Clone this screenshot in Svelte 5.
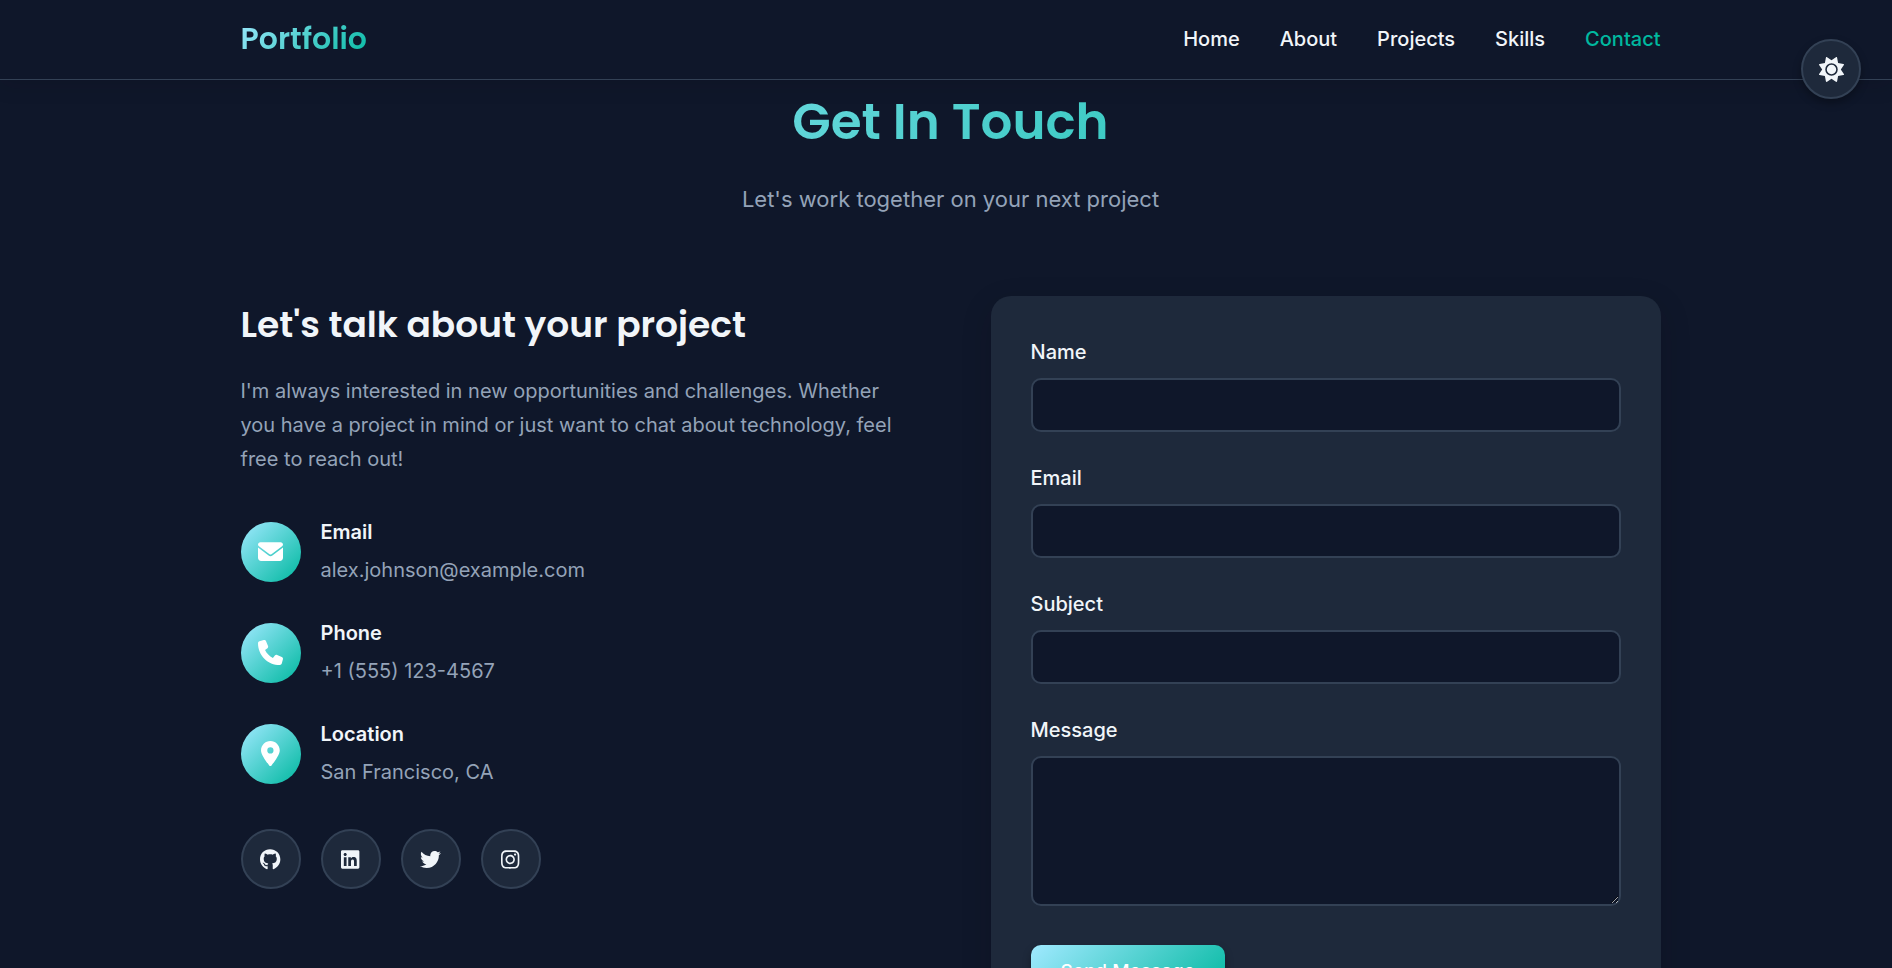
<script>
  const links = ['Home', 'About', 'Projects', 'Skills', 'Contact'];

  const contacts = [
    {
      title: 'Email',
      value: 'alex.johnson@example.com',
      box: '0 0 512 512',
      path: 'M48 64C21.5 64 0 85.5 0 112c0 15.1 7.1 29.3 19.2 38.4L236.8 313.6c11.4 8.5 27 8.5 38.4 0L492.8 150.4c12.1-9.1 19.2-23.3 19.2-38.4c0-26.5-21.5-48-48-48H48zM0 176V384c0 35.3 28.7 64 64 64H448c35.3 0 64-28.7 64-64V176L294.4 339.2c-22.8 17.1-54 17.1-76.8 0L0 176z'
    },
    {
      title: 'Phone',
      value: '+1 (555) 123-4567',
      box: '0 0 512 512',
      path: 'M164.9 24.6c-7.7-18.6-28-28.5-47.4-23.2l-88 24C12.1 30.2 0 46 0 64C0 311.4 200.6 512 448 512c18 0 33.8-12.1 38.6-29.5l24-88c5.3-19.4-4.6-39.7-23.2-47.4l-96-40c-16.3-6.8-35.2-2.1-46.3 11.6L304.7 368C234.3 334.7 177.3 277.7 144 207.3L193.3 167c13.7-11.2 18.4-30 11.6-46.3l-40-96z'
    },
    {
      title: 'Location',
      value: 'San Francisco, CA',
      box: '0 0 384 512',
      path: 'M215.7 499.2C267 435 384 279.4 384 192C384 86 298 0 192 0S0 86 0 192c0 87.4 117 243 168.3 307.2c12.3 15.3 35.1 15.3 47.4 0zM192 128a64 64 0 1 1 0 128 64 64 0 1 1 0-128z'
    }
  ];

  const socials = [
    {
      name: 'GitHub',
      box: '0 0 496 512',
      path: 'M165.9 397.4c0 2-2.3 3.6-5.2 3.6-3.3.3-5.6-1.3-5.6-3.6 0-2 2.3-3.6 5.2-3.6 3-.3 5.6 1.3 5.6 3.6zm-31.1-4.5c-.7 2 1.3 4.3 4.3 4.9 2.6 1 5.6 0 6.2-2s-1.3-4.3-4.3-5.2c-2.6-.7-5.5.3-6.2 2.3zm44.2-1.7c-2.9.7-4.9 2.6-4.6 4.9.3 2 2.9 3.3 5.9 2.6 2.9-.7 4.9-2.6 4.6-4.6-.3-1.9-3-3.2-5.9-2.9zM244.8 8C106.1 8 0 113.3 0 252c0 110.9 69.8 205.8 169.5 239.2 12.8 2.3 17.3-5.6 17.3-12.1 0-6.2-.3-40.4-.3-61.4 0 0-70 15-84.7-29.8 0 0-11.4-29.1-27.8-36.6 0 0-22.9-15.7 1.6-15.4 0 0 24.9 2 38.6 25.8 21.9 38.6 58.6 27.5 72.9 20.9 2.3-16 8.8-27.1 16-33.7-55.9-6.2-112.3-14.3-112.3-110.5 0-27.5 7.6-41.3 23.6-58.9-2.6-6.5-11.1-33.3 2.6-67.9 20.9-6.5 69 27 69 27 20-5.6 41.5-8.5 62.8-8.5s42.8 2.9 62.8 8.5c0 0 48.1-33.6 69-27 13.7 34.7 5.2 61.4 2.6 67.9 16 17.7 25.8 31.5 25.8 58.9 0 96.5-58.9 104.2-114.8 110.5 9.2 7.9 17 22.9 17 46.4 0 33.7-.3 75.4-.3 83.6 0 6.5 4.6 14.4 17.3 12.1C428.2 457.8 496 362.9 496 252 496 113.3 383.5 8 244.8 8z'
    },
    {
      name: 'LinkedIn',
      box: '0 0 448 512',
      path: 'M416 32H31.9C14.3 32 0 46.5 0 64.3v383.4C0 465.5 14.3 480 31.9 480H416c17.6 0 32-14.5 32-32.3V64.3c0-17.8-14.4-32.3-32-32.3zM135.4 416H69V202.2h66.5V416zm-33.2-243c-21.3 0-38.5-17.3-38.5-38.5S80.9 96 102.2 96c21.2 0 38.5 17.3 38.5 38.5 0 21.3-17.2 38.5-38.5 38.5zm282.1 243h-66.4V312c0-24.8-.5-56.7-34.5-56.7-34.6 0-39.9 27-39.9 54.9V416h-66.4V202.2h63.7v29.2h.9c8.9-16.8 30.6-34.5 62.9-34.5 67.2 0 79.7 44.3 79.7 101.9V416z'
    },
    {
      name: 'Twitter',
      box: '0 0 512 512',
      path: 'M459.37 151.716c.325 4.548.325 9.097.325 13.645 0 138.72-105.583 298.558-298.558 298.558-59.452 0-114.68-17.219-161.137-47.106 8.447.974 16.568 1.299 25.34 1.299 49.055 0 94.213-16.568 130.274-44.832-46.132-.975-84.792-31.188-98.112-72.772 6.498.974 12.995 1.624 19.818 1.624 9.421 0 18.843-1.3 27.614-3.573-48.081-9.747-84.143-51.98-84.143-102.985v-1.299c13.969 7.797 30.214 12.67 47.431 13.319-28.264-18.843-46.781-51.005-46.781-87.391 0-19.492 5.197-37.36 14.294-52.954 51.655 63.675 129.3 105.258 216.365 109.807-1.624-7.797-2.599-15.918-2.599-24.04 0-57.828 46.782-104.934 104.934-104.934 30.213 0 57.502 12.67 76.67 33.137 23.715-4.548 46.456-13.32 66.599-25.34-7.798 24.366-24.366 44.833-46.132 57.827 21.117-2.273 41.584-8.122 60.426-16.243-14.292 20.791-32.161 39.308-52.628 54.253z'
    },
    {
      name: 'Instagram',
      box: '0 0 448 512',
      path: 'M224.1 141c-63.6 0-114.9 51.3-114.9 114.9s51.3 114.9 114.9 114.9S339 319.5 339 255.9 287.7 141 224.1 141zm0 189.6c-41.1 0-74.7-33.5-74.7-74.7s33.5-74.7 74.7-74.7 74.7 33.5 74.7 74.7-33.6 74.7-74.7 74.7zm146.4-194.3c0 14.9-12 26.8-26.8 26.8-14.9 0-26.8-12-26.8-26.8s12-26.8 26.8-26.8 26.8 12 26.8 26.8zm76.1 27.2c-1.7-35.9-9.9-67.7-36.2-93.9-26.2-26.2-58-34.4-93.9-36.2-37-2.1-147.9-2.1-184.9 0-35.8 1.7-67.6 9.9-93.9 36.1s-34.4 58-36.2 93.9c-2.1 37-2.1 147.9 0 184.9 1.7 35.9 9.9 67.7 36.2 93.9s58 34.4 93.9 36.2c37 2.1 147.9 2.1 184.9 0 35.9-1.7 67.7-9.9 93.9-36.2 26.2-26.2 34.4-58 36.2-93.9 2.1-37 2.1-147.8 0-184.8zM398.8 388c-7.8 19.6-22.9 34.7-42.6 42.6-29.5 11.7-99.5 9-132.1 9s-102.7 2.6-132.1-9c-19.6-7.8-34.7-22.9-42.6-42.6-11.7-29.5-9-99.5-9-132.1s-2.6-102.7 9-132.1c7.8-19.6 22.9-34.7 42.6-42.6 29.5-11.7 99.5-9 132.1-9s102.7-2.6 132.1 9c19.6 7.8 34.7 22.9 42.6 42.6 11.7 29.5 9 99.5 9 132.1s2.7 102.7-9 132.1z'
    }
  ];

  const fields = [
    { id: 'name', label: 'Name', type: 'text' },
    { id: 'email', label: 'Email', type: 'email' },
    { id: 'subject', label: 'Subject', type: 'text' }
  ];
</script>

<div class="page">
  <header>
    <div class="container bar">
      <a class="brand" href="#home">Portfolio</a>
      <nav>
        {#each links as link}
          <a href={'#' + link.toLowerCase()} class:active={link === 'Contact'}>{link}</a>
        {/each}
      </nav>
    </div>
  </header>

  <button class="theme" type="button" aria-label="Toggle theme">
    <svg viewBox="0 0 512 512" aria-hidden="true">
      <path d="M361.5 1.2c5 2.1 8.6 6.6 9.6 11.9L391 121l107.9 19.8c5.3 1 9.8 4.6 11.9 9.6s1.5 10.7-1.6 15.2L446.9 256l62.3 90.3c3.1 4.5 3.7 10.2 1.6 15.2s-6.6 8.6-11.9 9.6L391 391 371.1 498.9c-1 5.3-4.6 9.8-9.6 11.9s-10.7 1.5-15.2-1.6L256 446.9l-90.3 62.3c-4.5 3.1-10.2 3.7-15.2 1.6s-8.6-6.6-9.6-11.9L121 391 13.1 371.1c-5.3-1-9.8-4.6-11.9-9.6s-1.5-10.7 1.6-15.2L65.1 256 2.8 165.7c-3.1-4.5-3.7-10.2-1.6-15.2s6.6-8.6 11.9-9.6L121 121 140.9 13.1c1-5.3 4.6-9.8 9.6-11.9s10.7-1.5 15.2 1.6L256 65.1 346.3 2.8c4.5-3.1 10.2-3.7 15.2-1.6zM160 256a96 96 0 1 1 192 0 96 96 0 1 1 -192 0zm224 0a128 128 0 1 0 -256 0 128 128 0 1 0 256 0z" />
    </svg>
  </button>

  <main class="container">
    <section class="intro">
      <h1>Get In Touch</h1>
      <p>Let's work together on your next project</p>
    </section>

    <div class="columns">
      <section>
        <h2>Let's talk about your project</h2>
        <p class="lead">
          I'm always interested in new opportunities and challenges. Whether you have a project in
          mind or just want to chat about technology, feel free to reach out!
        </p>
        <div class="contacts">
          {#each contacts as item}
            <div class="contact">
              <span class="badge">
                <svg viewBox={item.box} aria-hidden="true"><path d={item.path} /></svg>
              </span>
              <div>
                <h3>{item.title}</h3>
                <p>{item.value}</p>
              </div>
            </div>
          {/each}
        </div>
        <div class="socials">
          {#each socials as social}
            <a href={'#' + social.name.toLowerCase()} aria-label={social.name}>
              <svg viewBox={social.box} aria-hidden="true"><path d={social.path} /></svg>
            </a>
          {/each}
        </div>
      </section>

      <form>
        {#each fields as field}
          <div class="field">
            <label for={field.id}>{field.label}</label>
            <input id={field.id} type={field.type} />
          </div>
        {/each}
        <div class="field">
          <label for="message">Message</label>
          <textarea id="message"></textarea>
        </div>
        <button class="send" type="submit">Send Message</button>
      </form>
    </div>
  </main>
</div>

<style>
  :global(body) {
    margin: 0;
    background: #0f172a;
  }

  .page {
    --card: #1e293b;
    --line: #334155;
    --text: #f1f5f9;
    --muted: #94a3b8;
    --gradient: linear-gradient(135deg, #a0e9ff 0%, #00b89f 100%);
    --display: Poppins, Inter, sans-serif;
    height: 100vh;
    overflow: hidden;
    background: #0f172a;
    color: var(--text);
    font: 400 20px/34px Inter, sans-serif;
  }

  h1, h2, h3, p {
    margin: 0;
  }

  a {
    color: inherit;
    text-decoration: none;
  }

  svg {
    fill: currentColor;
    display: block;
  }

  .container {
    box-sizing: border-box;
    max-width: 1429px;
    margin: 0 auto;
    padding-left: 9px;
  }

  header {
    position: relative;
    border-bottom: 1px solid var(--line);
    box-shadow: 0 4px 20px rgba(20, 10, 20, 0.15);
  }

  .bar {
    display: flex;
    justify-content: space-between;
    align-items: center;
    height: 79px;
    padding-bottom: 2px;
  }

  .brand {
    font: 600 30px/50px var(--display);
    background: var(--gradient);
    background-clip: text;
    color: transparent;
  }

  nav {
    display: flex;
    gap: 40px;
    font-weight: 500;
  }

  nav .active {
    color: #00b89f;
  }

  .theme {
    position: absolute;
    top: 39px;
    right: 31px;
    width: 60px;
    height: 60px;
    display: grid;
    place-items: center;
    padding: 0;
    border: 2px solid var(--line);
    border-radius: 50%;
    background: var(--card);
    color: var(--text);
    box-shadow: 0 4px 8px rgba(0, 0, 0, 0.3);
  }

  .theme svg {
    height: 25px;
  }

  .intro {
    padding: 0 0 78px;
    text-align: center;
    color: var(--muted);
    font-size: 22px;
    line-height: 38px;
  }

  h1 {
    margin-bottom: 16px;
    font: 600 50px/84px var(--display);
    background: var(--gradient);
    background-clip: text;
    color: transparent;
  }

  .columns {
    display: grid;
    grid-template-columns: 1fr 1fr;
    gap: 80px;
  }

  h2 {
    margin-bottom: 20px;
    font: 600 36px/58px var(--display);
  }

  .lead {
    color: var(--muted);
  }

  .contacts {
    display: grid;
    gap: 30px;
    margin: 40px 0;
  }

  .contact {
    display: flex;
    align-items: center;
    gap: 20px;
  }

  .badge {
    width: 60px;
    height: 60px;
    display: grid;
    place-items: center;
    border-radius: 50%;
    background: var(--gradient);
    color: #fff;
  }

  .badge svg {
    height: 25px;
  }

  h3 {
    margin-bottom: 5px;
    font-size: 20px;
    line-height: 32px;
    font-weight: 600;
  }

  .contact p {
    color: var(--muted);
  }

  .socials {
    display: flex;
    gap: 20px;
  }

  .socials a {
    box-sizing: border-box;
    width: 60px;
    height: 60px;
    display: grid;
    place-items: center;
    border: 2px solid var(--line);
    border-radius: 50%;
    background: var(--card);
  }

  .socials svg {
    height: 21px;
  }

  form {
    padding: 40px;
    border-radius: 20px;
    background: var(--card);
    box-shadow: 0 10px 30px rgba(20, 10, 20, 0.2);
  }

  .field {
    display: grid;
    gap: 10px;
    margin-bottom: 30px;
  }

  label {
    font-weight: 500;
    line-height: 32px;
  }

  input,
  textarea {
    box-sizing: border-box;
    width: 100%;
    height: 54px;
    padding: 15px;
    border: 2px solid var(--line);
    border-radius: 10px;
    background: #0f172a;
    color: var(--text);
    font: inherit;
  }

  textarea {
    height: 150px;
    margin-bottom: 9px;
    resize: vertical;
  }

  .send {
    padding: 15px 30px;
    border: 0;
    border-radius: 10px;
    background: var(--gradient);
    color: #fff;
    font: 500 19px/24px Inter, sans-serif;
    box-shadow: 0 4px 8px rgba(0, 0, 0, 0.3);
  }
</style>
